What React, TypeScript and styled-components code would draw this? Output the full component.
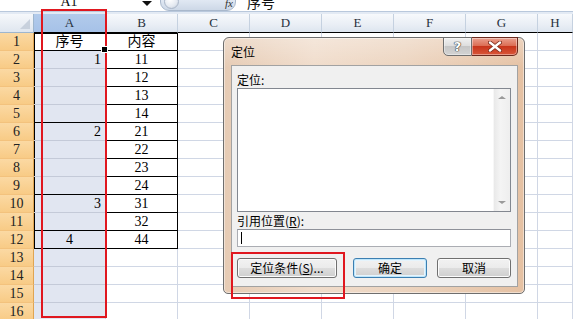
import React from "react";
import styled, { createGlobalStyle } from "styled-components";

const GlobalStyle = createGlobalStyle`
  html, body { margin: 0; padding: 0; background: #fff; }
  body { font-family: "Liberation Serif", "Noto Sans CJK SC", serif; }
`;

const GRID = "#d0d7e5";
const SEL_GRID = "#c4cad8";
const SEL_FILL = "#e1e6f1";

const Page = styled.div`
  position: relative;
  width: 573px;
  height: 319px;
  overflow: hidden;
  background: #fff;
`;

/* ---------- formula bar (only its lower edge is in view) ---------- */

const FormulaBar = styled.div`
  display: flex;
  align-items: flex-end;
  height: 11px;
  overflow: hidden;
  border-bottom: 1px solid #b9c8dc;
  font-size: 14px;
  line-height: 18px;
  color: #111;
`;

const NameBox = styled.div`
  width: 138px;
  text-align: center;
`;

const DropArrow = styled.div`
  width: 18px;
  align-self: flex-start;
  display: flex;
  justify-content: center;
  &::after {
    content: "";
    margin-top: 1px;
    border-left: 5px solid transparent;
    border-right: 5px solid transparent;
    border-top: 5px solid #111;
  }
`;

const FxPill = styled.div`
  width: 76px;
  height: 22px;
  margin-left: 4px;
  border: 1px solid #a9b8cc;
  border-radius: 9px;
  background: linear-gradient(180deg, #f1f5fb 0%, #dfe7f2 55%, #cdd8e7 100%);
  display: flex;
  align-items: flex-end;
  justify-content: space-between;
  box-sizing: border-box;
  padding: 0 2px 1px 3px;
`;

const PillKnob = styled.div`
  width: 15px;
  height: 15px;
  border-radius: 50%;
  background: radial-gradient(circle at 40% 35%, #ffffff 0%, #e4e9f1 60%, #b8c3d3 100%);
  border: 1px solid #aab6c8;
  box-sizing: border-box;
`;

const FxMark = styled.span`
  font-family: "Liberation Serif", serif;
  font-style: italic;
  font-size: 11px;
  line-height: 12px;
  color: #333;
`;

const FormulaText = styled.div`
  padding-left: 11px;
  font-family: "Noto Sans CJK SC", sans-serif;
  font-size: 14px;
`;

const Strip = styled.div`
  height: 2px;
  background: #e3eaf4;
`;

/* ---------- sheet grid ---------- */

const Sheet = styled.div`
  display: grid;
  grid-template-columns: 34px repeat(7, 72px) 1fr;
  grid-template-rows: 19px;
  grid-auto-rows: 18px;
`;

const Corner = styled.div`
  position: relative;
  box-sizing: border-box;
  border-right: 1px solid #9eb6ce;
  border-bottom: 1px solid #9eb6ce;
  background: linear-gradient(180deg, #f6f8fb, #dfe6ef);
  &::after {
    content: "";
    position: absolute;
    right: 3px;
    bottom: 3px;
    border-left: 10px solid transparent;
    border-bottom: 10px solid #c8d1dd;
  }
`;

const ColHead = styled.div<{ $sel?: boolean }>`
  box-sizing: border-box;
  border-right: 1px solid ${(p) => (p.$sel ? "#8eaad0" : "#c5d1e0")};
  border-bottom: 1px solid #000;
  background: ${(p) =>
    p.$sel
      ? "linear-gradient(180deg, #b2cbeb 0%, #a6c2e8 100%)"
      : "linear-gradient(180deg, #f7f9fc 0%, #e9eef5 60%, #dde5ef 100%)"};
  text-align: center;
  font-size: 13px;
  line-height: 18px;
  color: #27313d;
`;

const RowHead = styled.div`
  box-sizing: border-box;
  border-right: 1px solid #e0a552;
  border-bottom: 1px solid #f3c27d;
  background: linear-gradient(180deg, #fbd9a3 0%, #f8cb86 100%);
  text-align: center;
  font-size: 14px;
  line-height: 17px;
  color: #222;
`;

const Cell = styled.div<{
  $sel?: boolean;
  $white?: boolean;
  $r?: boolean;
  $b?: boolean;
  $l?: boolean;
  $t?: boolean;
  $align?: string;
}>`
  position: relative;
  box-sizing: border-box;
  border-right: 1px solid ${(p) => (p.$r ? "#000" : p.$sel ? SEL_GRID : GRID)};
  border-bottom: 1px solid ${(p) => (p.$b ? "#000" : p.$sel ? SEL_GRID : GRID)};
  box-shadow: ${(p) =>
    [p.$l ? "inset 1px 0 0 #000" : "", p.$t ? "inset 0 1px 0 #000" : ""]
      .filter(Boolean)
      .join(", ") || "none"};
  background: ${(p) => (p.$sel && !p.$white ? SEL_FILL : "#fff")};
  text-align: ${(p) => p.$align ?? "center"};
  padding: 0 4px;
  font-size: 14px;
  line-height: 17px;
  color: #000;
  white-space: nowrap;
`;

const FillHandle = styled.div`
  position: absolute;
  right: -3px;
  bottom: -3px;
  width: 5px;
  height: 5px;
  background: #000;
  border: 1px solid #fff;
  z-index: 1;
`;

/* ---------- dialog ---------- */

const Dialog = styled.div`
  position: absolute;
  left: 223px;
  top: 37px;
  width: 302px;
  box-sizing: border-box;
  border: 1px solid #6e6e6e;
  border-radius: 6px 6px 5px 5px;
  padding: 0 6px 6px 7px;
  background:
    linear-gradient(180deg, rgba(255, 255, 255, 0.3) 0px, rgba(255, 255, 255, 0) 30px),
    linear-gradient(90deg, #e6cbb4 0%, #f0dccb 30%, #ecd4bf 60%, #e5c1a3 100%);
  box-shadow: inset 0 0 0 1px rgba(255, 255, 255, 0.45);
  font-family: "Noto Sans CJK SC", sans-serif;
`;

const TitleBar = styled.div`
  display: flex;
  align-items: flex-start;
  justify-content: space-between;
  height: 27px;
`;

const Title = styled.div`
  font-size: 12px;
  line-height: 14px;
  padding-top: 7px;
  color: #000;
`;

const CaptionButtons = styled.div`
  display: flex;
  margin-top: -1px;
`;

const CaptionButton = styled.div<{ $close?: boolean }>`
  width: ${(p) => (p.$close ? 46 : 29)}px;
  height: 19px;
  box-sizing: border-box;
  border: 1px solid ${(p) => (p.$close ? "#6b2a1e" : "#6f6f6f")};
  border-left-width: ${(p) => (p.$close ? 0 : 1)}px;
  border-radius: ${(p) => (p.$close ? "0 0 5px 0" : "0 0 0 5px")};
  background: ${(p) =>
    p.$close
      ? "linear-gradient(180deg, #eaa08e 0%, #dc6e55 45%, #c8351b 50%, #d9573a 100%)"
      : "linear-gradient(180deg, #f1f1f1 0%, #dedede 45%, #c6c6c6 50%, #d3d3d3 100%)"};
  box-shadow: inset 0 0 0 1px rgba(255, 255, 255, 0.4);
  display: flex;
  align-items: center;
  justify-content: center;
`;

const HelpGlyph = styled.span`
  font-family: "DejaVu Sans", sans-serif;
  font-weight: bold;
  font-size: 13px;
  line-height: 13px;
  color: #fff;
  text-shadow: 0 0 1px #333, 0 0 1px #333, 0 0 1px #333;
`;

const Body = styled.div`
  box-sizing: border-box;
  border: 1px solid #a2a2a2;
  background: #f0f0f0;
  padding: 6px 6px 8px 5px;
  display: flex;
  flex-direction: column;
`;

const FieldLabel = styled.div`
  font-size: 12px;
  line-height: 16px;
  height: 16px;
  color: #000;
`;

const RefLabel = styled(FieldLabel)`
  height: 17px;
  line-height: 17px;
`;

const Key = styled.span`
  text-decoration: underline;
`;

const ListBox = styled.div`
  height: 124px;
  box-sizing: border-box;
  border: 1px solid #828790;
  background: #fff;
  display: flex;
  justify-content: flex-end;
`;

const ScrollTrack = styled.div`
  width: 17px;
  background: linear-gradient(90deg, #e9e9e9, #f4f4f4 40%, #eeeeee);
  border-left: 1px solid #f7f7f7;
  display: flex;
  flex-direction: column;
  justify-content: space-between;
  align-items: center;
  padding: 7px 0;
  box-sizing: border-box;
`;

const Arrow = styled.div<{ $down?: boolean }>`
  border-left: 4px solid transparent;
  border-right: 4px solid transparent;
  ${(p) => (p.$down ? "border-top: 3px solid #9a9a9a;" : "border-bottom: 3px solid #9a9a9a;")}
`;

const TextInput = styled.div`
  height: 18px;
  box-sizing: border-box;
  border: 1px solid #abadb3;
  border-top-color: #8e9199;
  background: #fff;
  padding: 2px 3px;
`;

const Caret = styled.div`
  width: 1px;
  height: 12px;
  background: #000;
`;

const ButtonRow = styled.div`
  display: flex;
  margin-top: 11px;
`;

const Button = styled.div<{ $w: number; $gap?: number; $default?: boolean }>`
  width: ${(p) => p.$w}px;
  height: 20px;
  margin-left: ${(p) => p.$gap ?? 0}px;
  box-sizing: border-box;
  border: 1px solid ${(p) => (p.$default ? "#3c7fb1" : "#707070")};
  border-radius: 3px;
  background: linear-gradient(180deg, #f2f2f2 0%, #ebebeb 50%, #dddddd 50%, #cfcfcf 100%);
  box-shadow: ${(p) =>
    p.$default ? "inset 0 0 0 1px #bfe6fb, inset 0 0 0 2px #e6f4fc" : "inset 0 0 0 1px #fcfcfc"};
  font-size: 12px;
  line-height: 18px;
  text-align: center;
  color: #000;
`;

const Annotation = styled.div<{ $x: number; $y: number; $w: number; $h: number }>`
  position: absolute;
  left: ${(p) => p.$x}px;
  top: ${(p) => p.$y}px;
  width: ${(p) => p.$w}px;
  height: ${(p) => p.$h}px;
  box-sizing: border-box;
  border: 2px solid #e0171f;
  pointer-events: none;
`;

type RowData = { a?: string; aAlign?: string; b?: string };

const data: RowData[] = [
  { a: "序号", aAlign: "center", b: "内容" },
  { a: "1", aAlign: "right", b: "11" },
  { b: "12" },
  { b: "13" },
  { b: "14" },
  { a: "2", aAlign: "right", b: "21" },
  { b: "22" },
  { b: "23" },
  { b: "24" },
  { a: "3", aAlign: "right", b: "31" },
  { b: "32" },
  { a: "4", aAlign: "center", b: "44" },
];

const groupEnds = [1, 5, 9, 11, 12];
const COLS = ["A", "B", "C", "D", "E", "F", "G", "H"];
const ROW_COUNT = 16;

const CloseIcon = () => (
  <svg width="14" height="11" viewBox="0 0 14 11">
    <path d="M2 1.5 L12 9.5 M12 1.5 L2 9.5" stroke="#7a2a1a" strokeWidth="4" strokeLinecap="round" />
    <path d="M2 1.5 L12 9.5 M12 1.5 L2 9.5" stroke="#fff" strokeWidth="2.4" strokeLinecap="round" />
  </svg>
);

export default function App() {
  const rows = Array.from({ length: ROW_COUNT }, (_, i) => i + 1);
  return (
    <Page>
      <GlobalStyle />
      <FormulaBar>
        <NameBox>A1</NameBox>
        <DropArrow />
        <FxPill>
          <PillKnob />
          <FxMark>fx</FxMark>
        </FxPill>
        <FormulaText>序号</FormulaText>
      </FormulaBar>
      <Strip />
      <Sheet>
        <Corner />
        {COLS.map((c) => (
          <ColHead key={c} $sel={c === "A"}>
            {c}
          </ColHead>
        ))}
        {rows.map((r) => {
          const d = data[r - 1];
          const bordered = r <= data.length;
          return (
            <React.Fragment key={r}>
              <RowHead>{r}</RowHead>
              <Cell
                $sel
                $white={r === 1}
                $r={bordered}
                $b={groupEnds.includes(r)}
                $l={bordered}
                $t={r === 1}
                $align={d?.aAlign}
              >
                {d?.a}
                {r === 1 && <FillHandle />}
              </Cell>
              <Cell $r={bordered} $b={bordered} $t={r === 1}>
                {d?.b}
              </Cell>
              {COLS.slice(2).map((c) => (
                <Cell key={c} />
              ))}
            </React.Fragment>
          );
        })}
      </Sheet>

      <Dialog>
        <TitleBar>
          <Title>定位</Title>
          <CaptionButtons>
            <CaptionButton>
              <HelpGlyph>?</HelpGlyph>
            </CaptionButton>
            <CaptionButton $close>
              <CloseIcon />
            </CaptionButton>
          </CaptionButtons>
        </TitleBar>
        <Body>
          <FieldLabel>定位:</FieldLabel>
          <ListBox>
            <ScrollTrack>
              <Arrow />
              <Arrow $down />
            </ScrollTrack>
          </ListBox>
          <RefLabel>
            引用位置(<Key>R</Key>):
          </RefLabel>
          <TextInput>
            <Caret />
          </TextInput>
          <ButtonRow>
            <Button $w={100}>
              定位条件(<Key>S</Key>)...
            </Button>
            <Button $w={74} $gap={16} $default>
              确定
            </Button>
            <Button $w={74} $gap={10}>
              取消
            </Button>
          </ButtonRow>
        </Body>
      </Dialog>

      <Annotation $x={41} $y={9} $w={66} $h={309} />
      <Annotation $x={231} $y={252} $w={114} $h={47} />
    </Page>
  );
}
